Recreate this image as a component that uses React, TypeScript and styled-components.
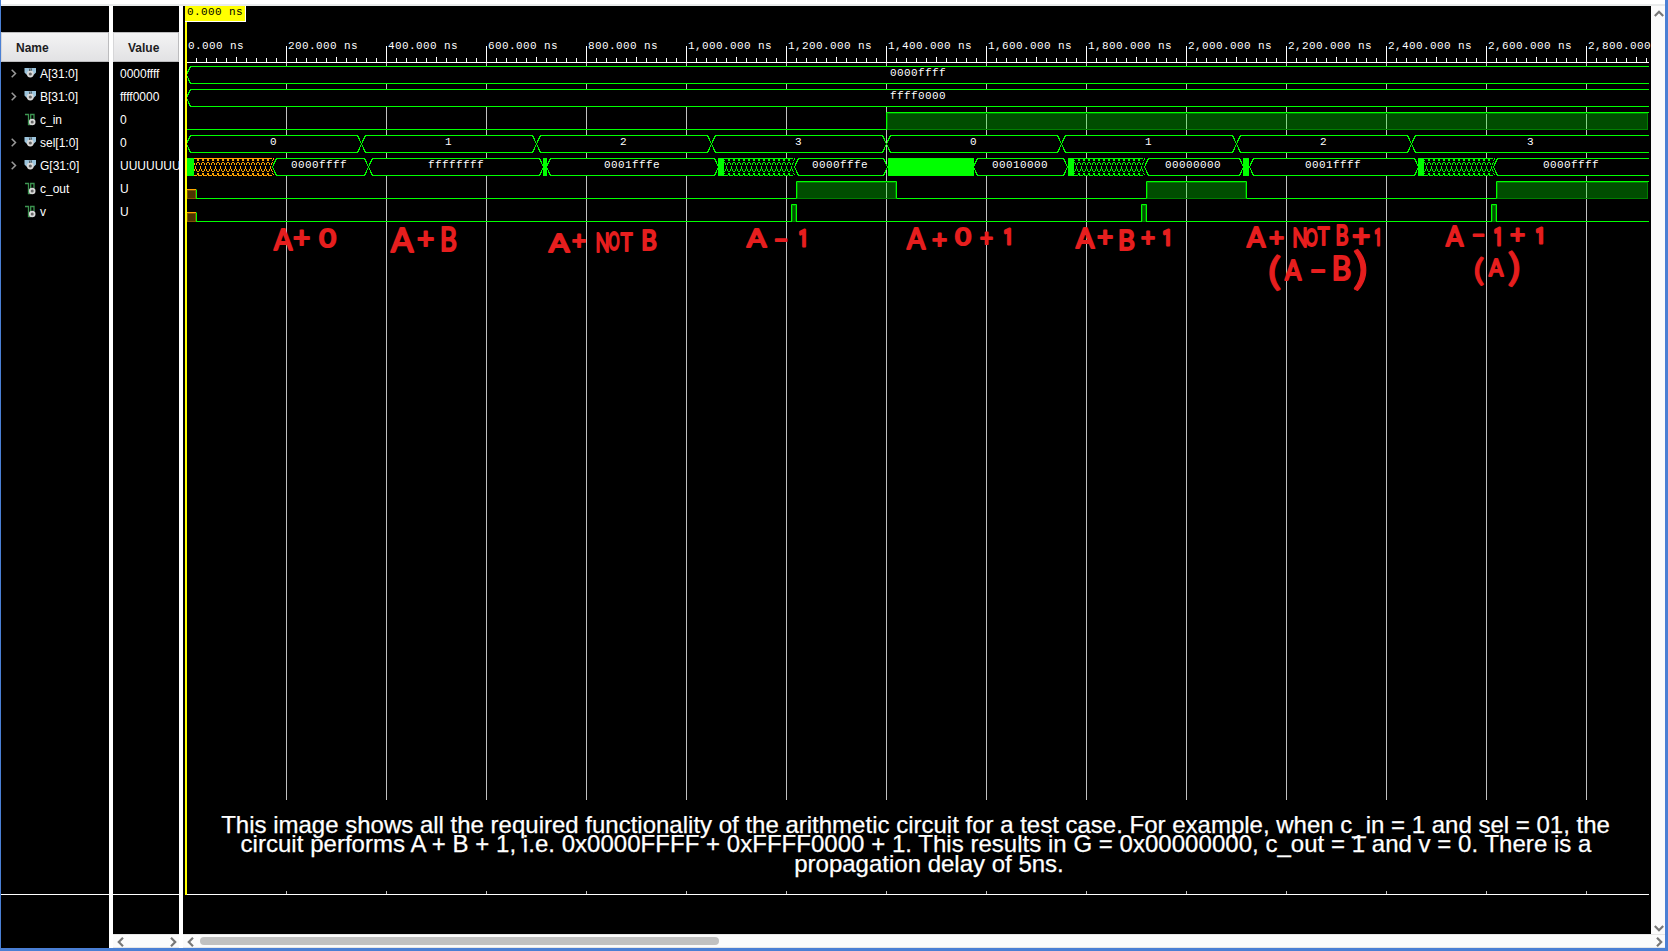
import React from "react";
import styled, { createGlobalStyle } from "styled-components";

const Global = createGlobalStyle`
  * { box-sizing: border-box; }
  body { margin: 0; background: #fff; overflow: hidden; }
`;

const GREEN = "#00ff00";
const ORANGE = "#ffa500";

const Frame = styled.div`
  width: 1668px;
  height: 951px;
  display: flex;
  flex-direction: column;
  background: #fff;
  border-left: 1px solid #4a7fd4;
  border-right: 3px solid #4a7fd4;
  border-bottom: 3px solid #4a7fd4;
  font-family: "Liberation Sans", Arial, sans-serif;
`;
const TopStrip = styled.div`
  height: 6px;
  flex: none;
  border-bottom: 2px solid #e9ebeb;
`;
const Body = styled.div`
  flex: 1;
  display: flex;
  min-height: 0;
`;
const Column = styled.div<{ $w: number }>`
  width: ${(p) => p.$w}px;
  margin-right: 4px;
  flex: none;
  display: flex;
  flex-direction: column;
  background: #000;
  overflow: hidden;
`;
const Header = styled.div<{ $indent: number }>`
  margin-top: 26px;
  height: 30px;
  flex: none;
  padding-left: ${(p) => p.$indent}px;
  border: 1px solid #bcbcbe;
  border-left-color: #d6d6d8;
  background: linear-gradient(#f3f3f4, #e2e2e4);
  font-size: 12px;
  font-weight: bold;
  line-height: 30px;
  color: #1c1c22;
`;
const Rows = styled.div`
  flex: none;
  height: 833px;
  border-bottom: 1px solid #fff;
`;
const Row = styled.div`
  height: 23px;
  display: flex;
  align-items: center;
  font-size: 12px;
  color: #fff;
  white-space: nowrap;
`;
const Expander = styled.span`
  width: 23px;
  height: 23px;
  padding: 7px 0 0 8px;
`;
const IconSlot = styled.span`
  width: 16px;
  height: 23px;
  padding-top: 5px;
`;
const ValueText = styled.span`
  padding-left: 7px;
`;
const Spring = styled.div`
  flex: 1;
`;
const HScroll = styled.div`
  height: 14px;
  flex: none;
  display: flex;
  align-items: center;
  justify-content: space-between;
  padding: 2px 1px 0 3px;
  background: #fbfbfb;
  border-top: 1px solid #e6e6e6;
  border-bottom: 1px solid #e6e6e6;
`;
const Thumb = styled.div`
  width: 519px;
  height: 8px;
  margin: -2px auto 0 4px;
  border-radius: 4px;
  background: #c1c1c1;
`;
const WavePane = styled.div`
  flex: 1;
  display: flex;
  flex-direction: column;
`;
const WaveMain = styled.div`
  flex: 1;
  display: flex;
  min-height: 0;
`;
const Canvas = styled.div`
  position: relative;
  width: 1468px;
  background: #000;
`;
const VScroll = styled.div`
  flex: 1;
  display: flex;
  flex-direction: column;
  justify-content: space-between;
  align-items: center;
  padding: 3px 0 1px 2px;
  background: #fbfbfb;
`;
const Cursor = styled.div`
  position: absolute;
  left: 2px;
  top: 0;
  width: 2px;
  height: 889px;
  background: #ff0;
`;
const CursorTag = styled.div`
  position: absolute;
  left: 2px;
  top: 0;
  width: 61px;
  height: 16px;
  padding-left: 2px;
  background: #ff0;
  border-right: 1px solid #fff;
  border-bottom: 1px solid #fff;
  font: 11px/12px "Liberation Mono", monospace;
  letter-spacing: 0.4px;
  white-space: nowrap;
  color: #000;
`;
const Caption = styled.div`
  position: absolute;
  left: 30px;
  top: 809px;
  width: 1432px;
  display: flex;
  flex-direction: column;
  align-items: center;
  font-size: 24px;
  color: #fff;
  -webkit-text-stroke: 0.25px #fff;
  white-space: nowrap;
`;
const CaptionLine = styled.div<{ $h: number; $trail?: number; $spread?: number }>`
  line-height: ${(p) => p.$h}px;
  padding-right: ${(p) => p.$trail ?? 0}px;
  letter-spacing: ${(p) => p.$spread ?? 0}px;
`;
const Mono = styled.text`
  font: 11px "Liberation Mono", monospace;
  letter-spacing: 0.4px;
  fill: #fff;
`;
const Ink = styled.text<{ $plain: boolean }>`
  font-family: ${(p) => (p.$plain ? "Roboto" : "Lato")}, "Open Sans", sans-serif;
  fill: #e61e1e;
  stroke: #e61e1e;
  stroke-linejoin: round;
  text-anchor: middle;
`;

type Dir = "left" | "right" | "up" | "down";
const turns: Record<Dir, number> = { right: 0, down: 90, left: 180, up: 270 };
const Chevron = ({ dir, size = 10, color = "#777", w = 2.2 }: { dir: Dir; size?: number; color?: string; w?: number }) => (
  <svg width={size} height={size} viewBox="0 0 10 10" display="block">
    <path d="M3 0.8 L7.2 5 L3 9.2" transform={`rotate(${turns[dir]} 5 5)`} fill="none" stroke={color} strokeWidth={w} />
  </svg>
);
const BusIcon = () => (
  <svg width="14" height="12" viewBox="0 0 14 12">
    <path d="M0.5 1H5V5L3 8L0.5 5.5Z M7.5 1H12V5.5L9.5 8L7.5 5Z" fill="#9cc4dc" />
    <path d="M4.5 1L6.2 4L8 1" fill="#7d98a8" />
    <circle cx="6.3" cy="7" r="2.5" fill="#666" stroke="#d8d8d8" strokeWidth="1.8" />
  </svg>
);
const BitIcon = () => (
  <svg width="14" height="14" viewBox="0 0 14 14">
    <path d="M1 1.5H4.5V11.5H7M6.7 7V1.5H10V6" fill="none" stroke="#3c9450" strokeWidth="1.3" />
    <circle cx="8.2" cy="9" r="2.4" fill="#666" stroke="#d8d8d8" strokeWidth="1.8" />
  </svg>
);

const signals = [
  { name: "A[31:0]", value: "0000ffff", bus: true },
  { name: "B[31:0]", value: "ffff0000", bus: true },
  { name: "c_in", value: "0", bus: false },
  { name: "sel[1:0]", value: "0", bus: true },
  { name: "G[31:0]", value: "UUUUUUUU", bus: true },
  { name: "c_out", value: "U", bus: false },
  { name: "v", value: "U", bus: false },
];

const END = 1649;
const rowTop = (i: number) => 66.5 + i * 23;

interface Seg { from: number; to: number; text: string; at: number }
const BusSeg = ({ top, seg }: { top: number; seg: Seg }) => {
  const { from: a, to: b } = seg;
  const open = b >= END;
  const m = top + 8.5;
  const e = top + 17;
  const leftSide = `H${a + 4} L${a + 2} ${e - 4} L${a} ${m} L${a + 2} ${top + 4} L${a + 4} ${top}`;
  const line = open
    ? `M${END} ${e} ${leftSide} H${END}`
    : `M${a + 4} ${top} H${b - 4} L${b - 2} ${top + 4} L${b} ${m} L${b - 2} ${e - 4} L${b - 4} ${e} ${leftSide}`;
  return (
    <g>
      <path d={line} fill="#000" stroke={GREEN} shapeRendering="crispEdges" />
      <Mono x={seg.at} y={top + 9.5}>{seg.text}</Mono>
    </g>
  );
};
const Block = ({ a, b, top }: { a: number; b: number; top: number }) => (
  <rect x={a} y={top - 0.5} width={b - a} height={18} fill={GREEN} />
);
const Hatch = ({ a, b, top, color }: { a: number; b: number; top: number; color: string }) => {
  const n = Math.round((b - a) / 5);
  let d = "";
  for (let i = 0; i < n; i++) {
    const x = a + i * 5 + 1.5;
    d += `M${x - 2} ${top}L${x + 4} ${top + 17}M${x + 4} ${top}L${x - 2} ${top + 17}`;
  }
  return (
    <g stroke={color} fill="none" shapeRendering="crispEdges">
      <rect x={a} y={top - 0.5} width={b - a} height={18} fill="#000" stroke="none" />
      <path d={d} strokeDasharray="3 0.8" />
      <path d={`M${a} ${top}H${b}M${a} ${top + 17}H${b}`} strokeDasharray="4 1" />
    </g>
  );
};
const High = ({ a, b, top }: { a: number; b: number; top: number }) => {
  const open = b >= END;
  return (
    <g fill="none">
      <rect x={a} y={top} width={b - a - (open ? 1 : 0)} height={17} fill={GREEN} fillOpacity={0.3} />
      <rect x={a + 1} y={top + 1} width={b - a - (open ? 2.5 : 2)} height={16} stroke="#008000" />
      <path d={`M${a} ${top + 17}V${top}H${b}${open ? "" : `V${top + 17}`}`} stroke={GREEN} />
    </g>
  );
};
const Unknown = ({ top }: { top: number }) => (
  <g fill="none">
    <rect x="187.5" y={top + 9} width="8" height="8" fill="#4c3200" stroke="#805300" />
    <path d={`M187 ${top + 8}H196`} stroke={ORANGE} />
    <path d={`M196.5 ${top + 8}V${top + 17}`} stroke={GREEN} />
  </g>
);

const selSegs: Seg[] = [0, 1, 2, 3, 4, 5, 6, 7].map((i) => ({
  from: 186.5 + i * 175,
  to: i === 7 ? END : 361.5 + i * 175,
  text: String(i % 4),
  at: i === 7 ? 1527 : 270 + i * 175,
}));
const gSegs: Seg[] = [
  { from: 272.5, to: 368.5, text: "0000ffff", at: 291 },
  { from: 368.5, to: 543.5, text: "ffffffff", at: 428 },
  { from: 546.5, to: 718.5, text: "0001fffe", at: 604 },
  { from: 794.5, to: 887.5, text: "0000fffe", at: 812 },
  { from: 973.5, to: 1067.5, text: "00010000", at: 992 },
  { from: 1144.5, to: 1243.5, text: "00000000", at: 1165 },
  { from: 1249.5, to: 1418.5, text: "0001ffff", at: 1305 },
  { from: 1493.5, to: END, text: "0000ffff", at: 1543 },
];
const blocks: [number, number][] = [[187, 194], [543, 547], [718, 724], [888, 974], [1068, 1074], [1243, 1249], [1418, 1424]];

/* Handwritten marks, each with the box it fills: character, left, right, top, bottom */
type Mark = [string, number, number, number, number];
const notes: Mark[] = [
  ["A", 273, 293, 228, 251], ["+", 293, 310, 229, 245], ["0", 319, 336, 228, 248],
  ["A", 390, 414, 227, 253], ["+", 417, 434, 231, 245], ["B", 441, 456, 227, 252],
  ["A", 548, 570, 233, 253], ["+", 572, 586, 233, 247], ["N", 596, 609, 231, 253], ["O", 608, 620, 231, 251], ["T", 620, 633, 232, 252], ["B", 642, 656, 230, 251],
  ["A", 746, 767, 228, 248], ["−", 774, 788, 233, 247], ["1", 801, 806, 229, 247],
  ["A", 906, 926, 227, 250], ["+", 932, 947, 232, 246], ["0", 955, 971, 228, 246], ["+", 980, 993, 231, 245], ["1", 1006, 1011, 228, 245],
  ["A", 1075, 1095, 228, 249], ["+", 1097, 1113, 229, 243], ["B", 1119, 1134, 229, 251], ["+", 1141, 1155, 230, 244], ["1", 1165, 1170, 229, 246],
  ["A", 1246, 1266, 227, 248], ["+", 1269, 1284, 230, 244], ["N", 1293, 1307, 226, 248], ["O", 1305, 1318, 228, 247], ["T", 1317, 1330, 226, 246], ["B", 1336, 1348, 225, 246], ["+", 1352, 1370, 229, 243], ["1", 1376, 1380, 228, 246],
  ["(", 1267, 1282, 255, 292], ["A", 1284, 1302, 259, 281], ["−", 1310, 1326, 263, 277], ["B", 1333, 1350, 256, 281], [")", 1354, 1367, 250, 292],
  ["A", 1445, 1464, 226, 247], ["−", 1472, 1485, 228, 242], ["1", 1496, 1501, 227, 246], ["+", 1510, 1525, 227, 241], ["1", 1538, 1543, 228, 244],
  ["(", 1471, 1487, 257, 286], ["A", 1488, 1504, 258, 277], [")", 1507, 1521, 251, 287],
];
const inkWidth: Record<string, number> = { A: 0.67, B: 0.5, N: 0.59, O: 0.73, T: 0.56, "0": 0.52, "1": 0.24, "(": 0.18, ")": 0.18 };
const Handwritten = ({ mark }: { mark: Mark }) => {
  const [c, l, r, t, b] = mark;
  const w = r - l;
  const h = b - t;
  const cx = (l + r) / 2;
  let size = (h - 2) / 0.72;
  let base = b - 1;
  let limit = 1.6;
  let pen = 2.1;
  if (c === "+" || c === "−") {
    size = (w - 1) / 0.54;
    base = (t + b) / 2 + 0.36 * size;
  } else if (c === "(" || c === ")") {
    size = h / 0.95;
    base = b - 0.17 * size;
    limit = 1.35;
    pen = 0.9;
  } else if (c === "1") {
    pen = 3.2;
  }
  const sx = c in inkWidth ? Math.min((w - (c === "1" ? 1 : 2)) / (inkWidth[c] * size), limit) : 1;
  return (
    <Ink $plain={c === "1"} transform={`translate(${cx} ${base}) scale(${sx} 1)`} fontSize={size} strokeWidth={pen}>
      {c}
    </Ink>
  );
};

const ticks = Array.from({ length: 146 }, (_, i) => i + 1);
const majors = Array.from({ length: 15 }, (_, i) => i);

const Waveforms = () => {
  const g = rowTop(4);
  return (
    <svg width="1468" height="928" viewBox="183 6 1468 928" display="block">
      <g stroke="#c0c0c0">
        {majors.slice(1).map((i) => (
          <path key={i} d={`M${186.5 + i * 100} 63V800M${186.5 + i * 100} 891V894`} />
        ))}
      </g>
      <g stroke="#fff">
        <path d="M187 62.5H1649M187 894.5H1649" />
        {ticks.map((i) => (
          <path key={i} d={`M${186.5 + i * 10} ${i % 10 === 0 ? 46 : i % 5 === 0 ? 57 : 58}V62`} />
        ))}
      </g>
      {majors.map((i) => (
        <Mono key={i} x={188 + i * 100} y={49}>
          {i === 0 ? "0.000 ns" : `${(i * 200).toLocaleString("en-US")}.000${i === 14 ? "" : " ns"}`}
        </Mono>
      ))}
      <BusSeg top={rowTop(0)} seg={{ from: 186.5, to: END, text: "0000ffff", at: 890 }} />
      <BusSeg top={rowTop(1)} seg={{ from: 186.5, to: END, text: "ffff0000", at: 890 }} />
      <path d={`M187 ${rowTop(2) + 17}H886.5`} stroke={GREEN} />
      <High a={886.5} b={END} top={rowTop(2)} />
      {selSegs.map((s) => <BusSeg key={s.from} top={rowTop(3)} seg={s} />)}
      {gSegs.map((s) => <BusSeg key={s.from} top={g} seg={s} />)}
      <Hatch a={193} b={272} top={g} color={ORANGE} />
      <Hatch a={724} b={794} top={g} color={GREEN} />
      <Hatch a={1074} b={1144} top={g} color={GREEN} />
      <Hatch a={1424} b={1493} top={g} color={GREEN} />
      {blocks.map(([a, b]) => <Block key={a} a={a} b={b} top={g} />)}
      <path d={`M196 ${rowTop(5) + 17}H796.5M896.5 ${rowTop(5) + 17}H1146.5M1246.5 ${rowTop(5) + 17}H1496.5`} stroke={GREEN} />
      <High a={796.5} b={896.5} top={rowTop(5)} />
      <High a={1146.5} b={1246.5} top={rowTop(5)} />
      <High a={1496.5} b={END} top={rowTop(5)} />
      <path d={`M196 ${rowTop(6) + 17}H${END}`} stroke={GREEN} />
      {[791.5, 1141.5, 1491.5].map((x) => <High key={x} a={x} b={x + 5} top={rowTop(6)} />)}
      <Unknown top={rowTop(5)} />
      <Unknown top={rowTop(6)} />
      {notes.map((m, i) => <Handwritten key={i} mark={m} />)}
    </svg>
  );
};

export default function App() {
  return (
    <Frame>
      <Global />
      <TopStrip />
      <Body>
        <Column $w={108}>
          <Header $indent={14}>Name</Header>
          <Rows>
            {signals.map((s) => (
              <Row key={s.name}>
                <Expander>{s.bus && <Chevron dir="right" size={9} color="#999" w={1.7} />}</Expander>
                <IconSlot>{s.bus ? <BusIcon /> : <BitIcon />}</IconSlot>
                <span>{s.name}</span>
              </Row>
            ))}
          </Rows>
        </Column>
        <Column $w={66}>
          <Header $indent={14}>Value</Header>
          <Rows>
            {signals.map((s) => (
              <Row key={s.name}><ValueText>{s.value}</ValueText></Row>
            ))}
          </Rows>
          <Spring />
          <HScroll><Chevron dir="left" /><Chevron dir="right" /></HScroll>
        </Column>
        <WavePane>
          <WaveMain>
            <Canvas>
              <Waveforms />
              <Cursor />
              <CursorTag>0.000 ns</CursorTag>
              <Caption>
                <CaptionLine $h={20} $trail={27}>
                  This image shows all the required functionality of the arithmetic circuit for a test case. For example, when c_in = 1 and sel = 01, the
                </CaptionLine>
                <CaptionLine $h={18} $trail={26} $spread={0.03}>
                  circuit performs A + B + 1, i.e. 0x0000FFFF + 0xFFFF0000 + 1. This results in G = 0x00000000, c_out = 1 and v = 0. There is a
                </CaptionLine>
                <CaptionLine $h={21}>propagation delay of 5ns.</CaptionLine>
              </Caption>
            </Canvas>
            <VScroll><Chevron dir="up" /><Chevron dir="down" /></VScroll>
          </WaveMain>
          <HScroll><Chevron dir="left" /><Thumb /><Chevron dir="right" /></HScroll>
        </WavePane>
      </Body>
    </Frame>
  );
}
